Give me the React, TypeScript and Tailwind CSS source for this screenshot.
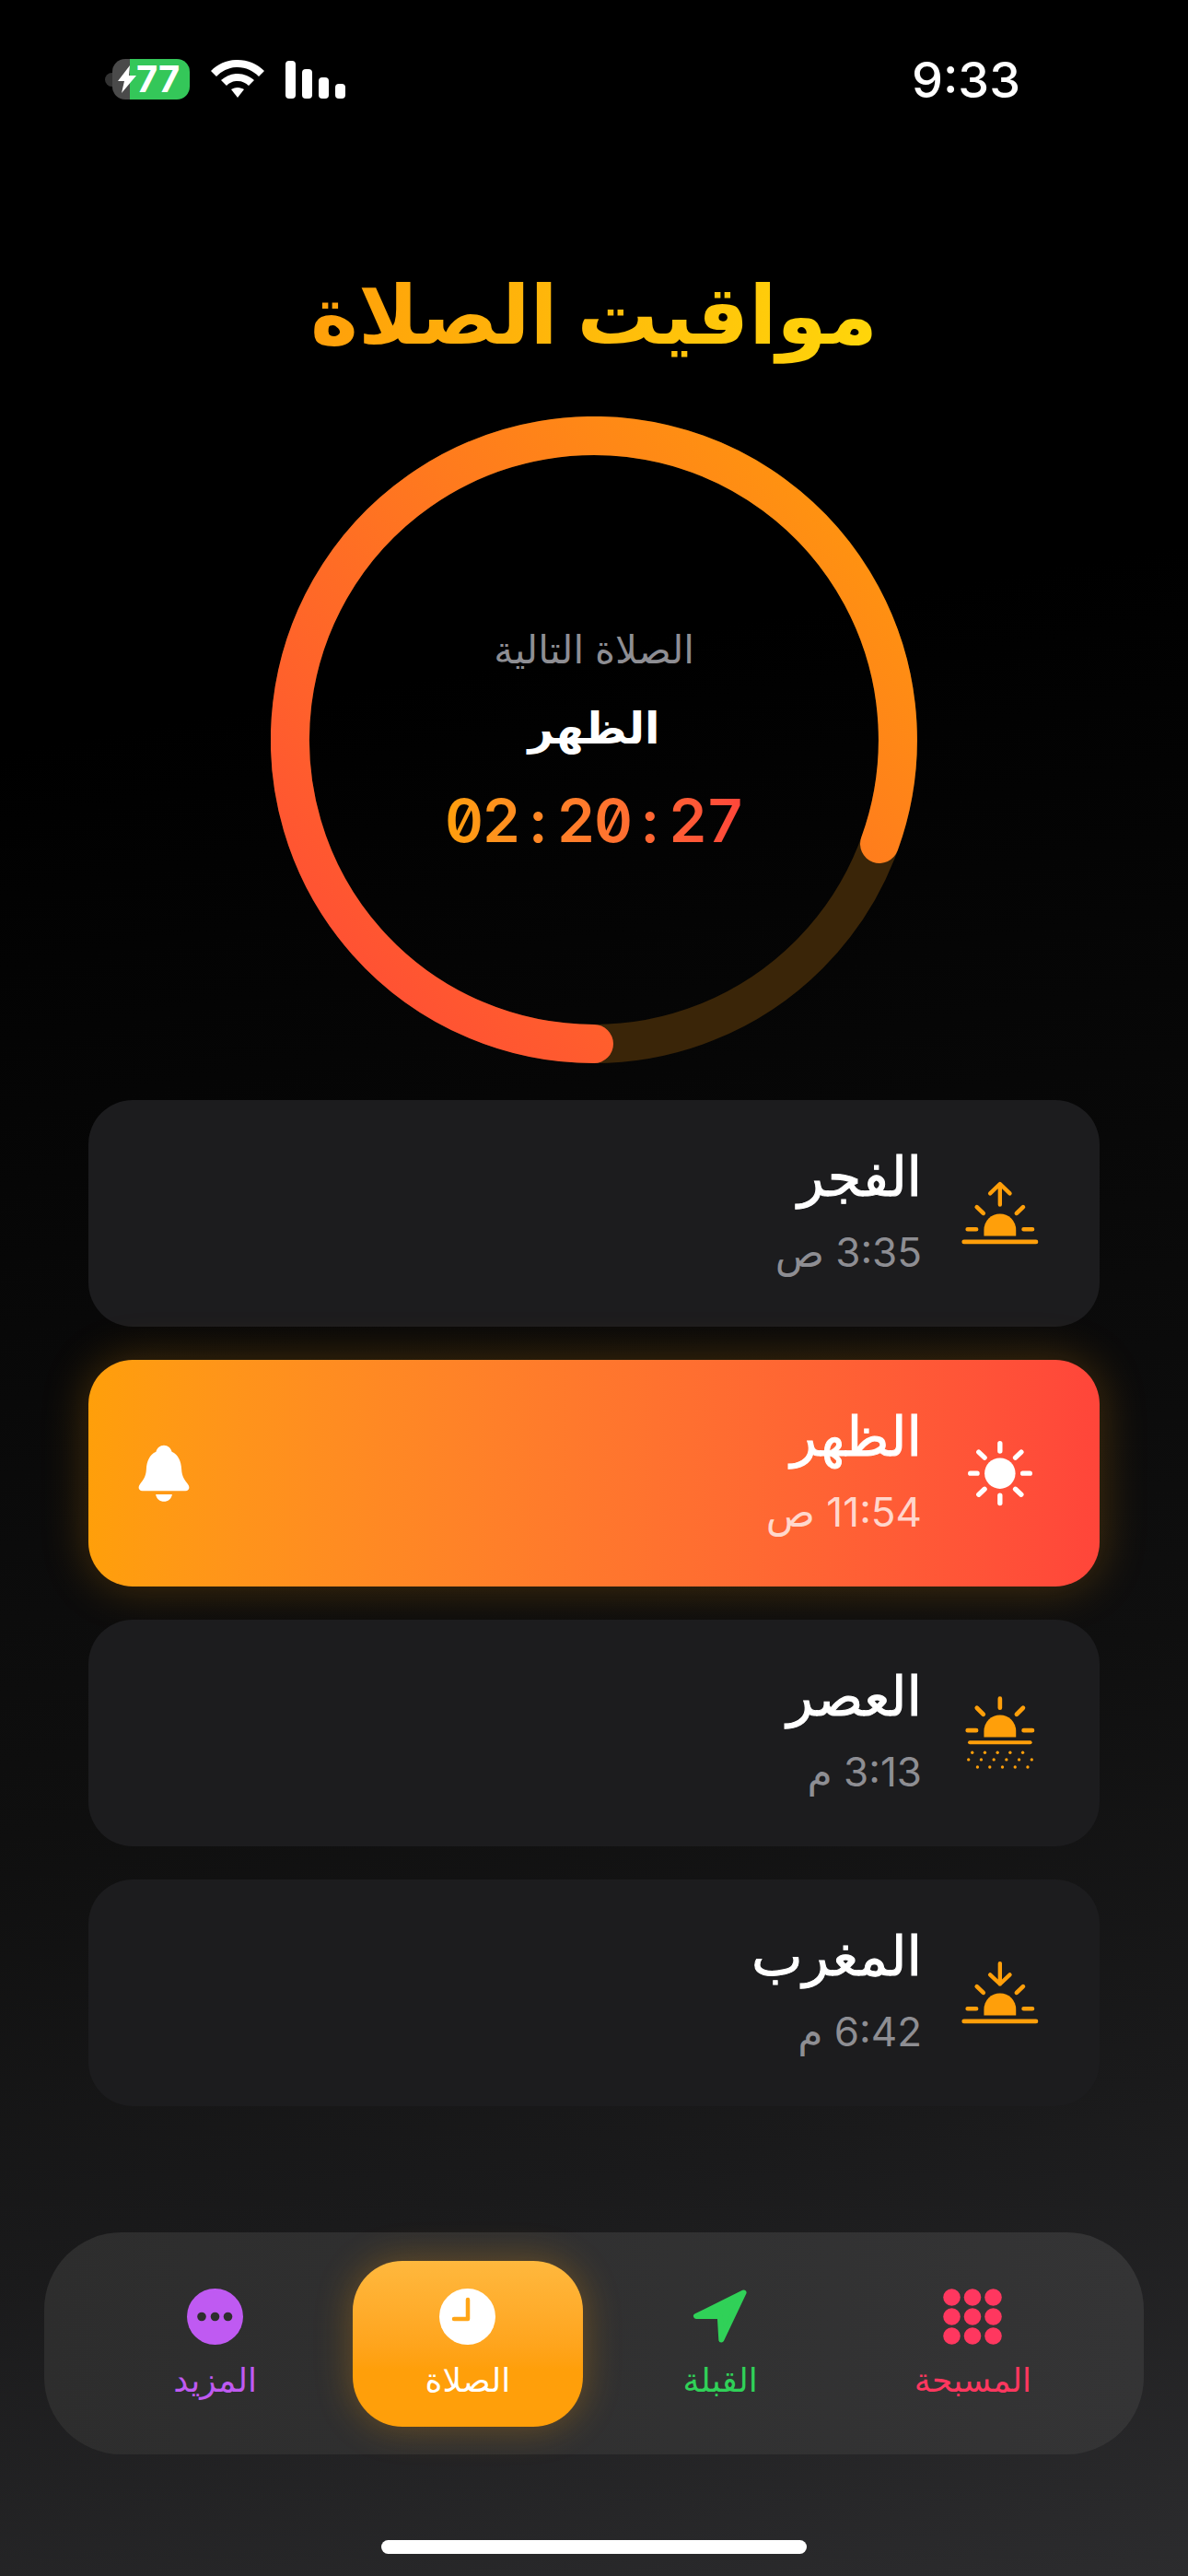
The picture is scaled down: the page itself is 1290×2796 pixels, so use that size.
const prayers = [
  { name: "الفجر", time: "3:35 ص", icon: "sunrise" },
  { name: "الظهر", time: "11:54 ص", icon: "sun", active: true },
  { name: "العصر", time: "3:13 م", icon: "haze" },
  { name: "المغرب", time: "6:42 م", icon: "sunset" },
];

function SunBase() {
  return (
    <>
      <path d="M505 356v-20a52 52 0 0 1 104 0v20z" fill="#ff9f0a" stroke="none" />
      <path d="M440 375h234" strokeWidth="14" />
      <path d="M452 334h28M634 334h28M482 262l21 20M632 262l-21 20" strokeWidth="14" />
    </>
  );
}

function SunriseIcon() {
  return (
    <svg width="92" height="72" viewBox="420 175 275 215" fill="none" stroke="#ff9f0a" strokeLinecap="round" strokeLinejoin="round">
      <SunBase />
      <path d="M557 254V187M525 218l32-31 32 31" strokeWidth="13" />
    </svg>
  );
}

function SunsetIcon() {
  return (
    <svg width="92" height="72" viewBox="420 175 275 215" fill="none" stroke="#ff9f0a" strokeLinecap="round" strokeLinejoin="round">
      <SunBase />
      <path d="M557 187V254M525 224l32 30 32-30" strokeWidth="13" />
    </svg>
  );
}

function SunIcon() {
  return (
    <svg width="92" height="72" viewBox="420 1026 275 215" fill="none" stroke="#fff" strokeLinecap="round" strokeWidth="16">
      <circle cx="557" cy="1134" r="50" fill="#fff" stroke="none" />
      <path d="M557 1037v25M557 1206v25M461 1134h22M631 1134h23M488 1065l19 18M626 1065l-19 18M488 1203l19-18M626 1203l-19-18" />
    </svg>
  );
}

function HazeIcon() {
  const rows = [
    { y: 305, xs: [467, 508, 549, 590, 631] },
    { y: 328, xs: [455, 496, 537, 578, 619, 660] },
    { y: 352, xs: [484, 524, 565, 606, 647] },
  ];
  return (
    <svg width="92" height="80" viewBox="420 122 275 239" fill="none" stroke="#ff9f0a" strokeLinecap="round">
      <path d="M505 255v-20a52 52 0 0 1 104 0v20z" fill="#ff9f0a" stroke="none" />
      <path d="M557 130v30M452 233h28M634 233h28M482 160l21 21M632 160l-21 21" strokeWidth="14" />
      <path d="M459 272h196" strokeWidth="12" />
      {rows.map((r) => r.xs.map((x) => <circle key={`${r.y}-${x}`} cx={x} cy={r.y} r="5" fill="#ff9f0a" stroke="none" />))}
    </svg>
  );
}

function BellIcon() {
  return (
    <svg width="56" height="63" viewBox="208 320 170 190" fill="#fff">
      <path d="M293 322c13 0 23 9 26 21 21 9 31 32 32 57 1 25 11 37 21 50 8 10 4 22-8 22H222c-12 0-16-12-8-22 10-13 20-25 21-50 1-25 11-48 32-57 3-12 13-21 26-21z" />
      <path d="M266 483h54c-2 15-14 24-27 24s-25-9-27-24z" />
    </svg>
  );
}

function PrayerIcon({ icon }: { icon: string }) {
  if (icon === "sunrise") return <SunriseIcon />;
  if (icon === "sunset") return <SunsetIcon />;
  if (icon === "haze") return <HazeIcon />;
  return <SunIcon />;
}

function PrayerCard({ name, time, icon, active }: { name: string; time: string; icon: string; active?: boolean }) {
  return (
    <div
      className={
        active
          ? "flex h-[246px] items-center rounded-[48px] bg-gradient-to-l from-[#ff453a] to-[#ff9f0a] pr-[62px] pl-[54px] shadow-[0_0_50px_rgba(255,159,10,0.25)]"
          : "flex h-[246px] items-center rounded-[48px] bg-[#1c1c1e] pr-[62px] pl-[54px]"
      }
    >
      <PrayerIcon icon={icon} />
      <div className="mr-[39px] flex flex-col gap-[18px] pb-[10px]">
        <div className="text-[59px] leading-[76px] font-medium text-white [-webkit-text-stroke:1px_#fff]">{name}</div>
        <div className={active ? "text-[44px] leading-[52px] text-white/75" : "text-[44px] leading-[52px] text-[#8e8e93]"}>{time}</div>
      </div>
      {active && (
        <div className="mr-auto">
          <BellIcon />
        </div>
      )}
    </div>
  );
}

function NavItem({ label, color, active, children }: { label: string; color: string; active?: boolean; children: React.ReactNode }) {
  return (
    <div
      className={
        active
          ? "flex h-[180px] flex-col items-center rounded-[54px] bg-gradient-to-b from-[#ffb83d] via-[#ff9f0a] via-65% to-[#ff9f0a] pt-[30px] shadow-[0_0_40px_rgba(255,159,10,0.3)]"
          : "flex h-[180px] flex-col items-center pt-[30px]"
      }
    >
      <div className="flex h-[61px] items-center justify-center">{children}</div>
      <div className={`mt-[16px] text-[36px] leading-[44px] ${color}`}>{label}</div>
    </div>
  );
}

function Ring() {
  return (
    <svg width="702" height="702" viewBox="0 0 702 702" fill="none" className="[grid-area:1/1]">
      <defs>
        <linearGradient id="ring" gradientUnits="userSpaceOnUse" x1="702" y1="0" x2="0" y2="702">
          <stop offset="0" stopColor="#ff9f0a" />
          <stop offset="1" stopColor="#ff453a" />
        </linearGradient>
      </defs>
      <circle cx="351" cy="351" r="330" stroke="#3a2508" strokeWidth="42" />
      <path d="M351 681A330 330 0 1 1 661 463.9" stroke="url(#ring)" strokeWidth="42" strokeLinecap="round" />
    </svg>
  );
}

export default function App() {
  return (
    <div
      dir="rtl"
      className="flex h-[2796px] w-[1290px] flex-col overflow-hidden bg-[linear-gradient(170deg,#000_27%,#0f0f0f_66%,#1a1a1b_82%,#2c2c2e_100%)] font-['Inter','Noto_Sans','DejaVu_Sans',sans-serif]"
    >
      {/* status bar */}
      <div dir="ltr" className="flex h-[176px] items-start justify-between pt-[64px] pr-[182px] pl-[114px]">
        <div className="flex items-center">
          <div className="h-[15px] w-[8px] rounded-l-[8px] bg-[#333]" />
          <div className="flex h-[44px] w-[84px] items-center rounded-[14px] bg-[linear-gradient(90deg,#4a4a4a_19px,#34c759_19px)] pl-[6px]">
            <svg width="20" height="30" viewBox="0 0 20 30" fill="#fff">
              <path d="M13 0 0 17h7L4 30 20 11h-8z" />
            </svg>
            <span className="text-[40px] leading-none font-bold text-white">77</span>
          </div>
          <svg width="58" height="43" viewBox="0 0 58 43" fill="#fff" className="ml-[23px]">
            <path d="M29 0c11 0 21 4 29 12l-6 6C46 12 38 8 29 8S12 12 6 18l-6-6C8 4 18 0 29 0z" />
            <path d="M29 15c7 0 13 3 18 7l-6 6c-3-3-7-5-12-5s-9 2-12 5l-6-6c5-4 11-7 18-7z" />
            <path d="M29 30c3 0 5 1 7 2l-7 9-7-9c2-1 4-2 7-2z" />
          </svg>
          <div className="ml-[23px] flex items-end gap-[7px]">
            <div className="h-[41px] w-[11px] rounded-[4px] bg-white" />
            <div className="h-[32px] w-[11px] rounded-[4px] bg-white" />
            <div className="h-[23px] w-[11px] rounded-[4px] bg-white" />
            <div className="h-[16px] w-[11px] rounded-[4px] bg-white" />
          </div>
        </div>
        <div className="text-[54px] leading-[46px] font-medium text-white">9:33</div>
      </div>

      <div className="flex h-[276px] justify-center pt-[100px]">
        <h1 className="h-[130px] bg-gradient-to-l from-[#ffd60a] to-[#ff9f0a] bg-clip-text text-center text-[88px] leading-[130px] font-bold text-transparent">
          مواقيت الصلاة
        </h1>
      </div>

      <div className="grid h-[742px] justify-center">
        <div className="grid h-[702px] w-[702px]">
          <Ring />
          <div className="flex flex-col items-center pt-[226px] [grid-area:1/1]">
            <div className="text-[42px] leading-[54px] text-[#8e8e93]">الصلاة التالية</div>
            <div className="mt-[20px] text-[48px] leading-[76px] font-bold text-white">الظهر</div>
            <div
              dir="ltr"
              className="mt-[23px] flex bg-gradient-to-r from-[#ff9f0a] to-[#ff453a] bg-clip-text text-[65px] leading-[80px] font-semibold text-transparent [font-feature-settings:'zero','tnum']"
            >
              {"02:20:27".split("").map((c, i) => (
                <span key={i} className="w-[40.5px] text-center">
                  {c}
                </span>
              ))}
            </div>
          </div>
        </div>
      </div>

      <div className="flex flex-col gap-[36px] px-[96px]">
        {prayers.map((p) => (
          <PrayerCard key={p.name} {...p} />
        ))}
      </div>

      <div className="mx-[48px] mt-[137px] grid h-[241px] grid-cols-4 items-center gap-[25px] rounded-[84px] bg-gradient-to-r from-[#2d2d2d] to-[#343435] px-[61px]">
        <NavItem label="المسبحة" color="text-[#ff375f]">
          <svg width="64" height="61" viewBox="0 0 64 61" fill="#ff375f">
            {[9.5, 30.5, 51.5].map((y) => [9.5, 32, 54.5].map((x) => <circle key={`${x}-${y}`} cx={x} cy={y} r="9.3" />))}
          </svg>
        </NavItem>
        <NavItem label="القبلة" color="text-[#30d158]">
          <svg width="64" height="62" viewBox="108 82 64 62">
            <path d="M165.5 87.5 114 113l25.8 0 1.5 25.5z" fill="#30d158" stroke="#30d158" strokeWidth="6" strokeLinejoin="round" />
          </svg>
        </NavItem>
        <NavItem label="الصلاة" color="text-white" active>
          <svg width="61" height="61" viewBox="0 0 61 61">
            <circle cx="30.5" cy="30.5" r="30.5" fill="#fff" />
            <path d="M31 12v21H16" fill="none" stroke="#ffa516" strokeWidth="4.5" strokeLinecap="round" strokeLinejoin="round" />
          </svg>
        </NavItem>
        <NavItem label="المزيد" color="text-[#bf5af2]">
          <svg width="61" height="61" viewBox="0 0 61 61" fill="#2e2e2e">
            <circle cx="30.5" cy="30.5" r="30.5" fill="#bf5af2" />
            <circle cx="16" cy="30.5" r="4.8" />
            <circle cx="30.5" cy="30.5" r="4.8" />
            <circle cx="44.5" cy="30.5" r="4.8" />
          </svg>
        </NavItem>
      </div>

      <div className="mx-auto mt-[93px] h-[15px] w-[462px] rounded-full bg-white" />
    </div>
  );
}
